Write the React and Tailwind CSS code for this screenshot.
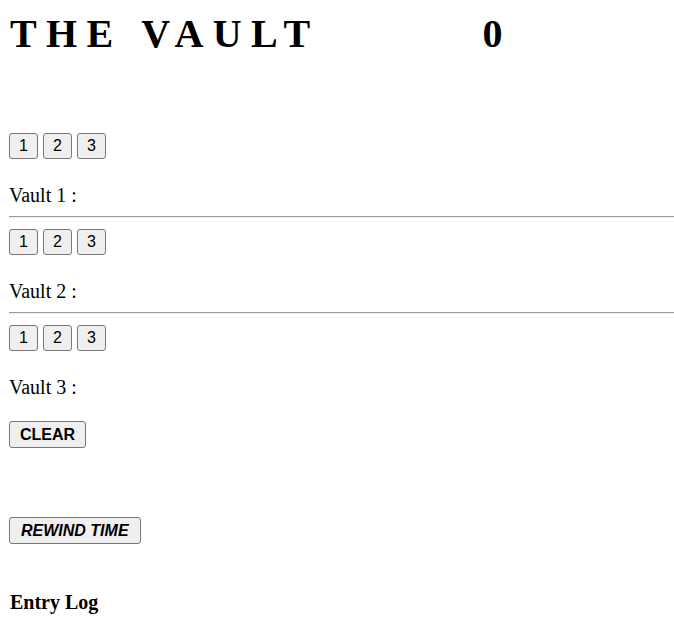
import React from 'react';

const serif = "font-['Liberation_Serif','Times_New_Roman',serif]";
const sans = "font-['Liberation_Sans',Arial,sans-serif]";

function NumButton({ n }) {
  return (
    <button className={`${sans} h-[26px] w-[29px] flex items-center justify-center bg-[#efefef] border border-[#767676] rounded-[3px] text-[16px] leading-[18px] text-black`}>
      {n}
    </button>
  );
}

function Vault({ id, last }) {
  return (
    <div>
      <div className="flex gap-[5px] ml-[9px]">
        <NumButton n="1" />
        <NumButton n="2" />
        <NumButton n="3" />
      </div>
      <p className={`${serif} mt-[25px] ml-[9px] text-[20px] leading-[22px] text-black`}>Vault {id} :</p>
      {!last && (
        <div className="mt-[10px] mb-[11px] ml-[9px] w-[665px] h-[2px] border-t border-[#9a9a9a] border-b border-b-[#eeeeee]" />
      )}
    </div>
  );
}

export default function App() {
  return (
    <div className="min-h-screen bg-white text-black">
      <h1 className={`${serif} pt-[11px] ml-[10px] flex text-[40px] leading-[46px] font-bold tracking-[9.4px]`}>
        <span>THE VAULT</span>
        <span className="ml-[163px]">0</span>
      </h1>

      <div className="mt-[76px]">
        <Vault id={1} />
        <Vault id={2} />
        <Vault id={3} last />
      </div>

      <button className={`${sans} mt-[23px] ml-[9px] h-[27px] px-[10px] flex items-center bg-[#efefef] border border-[#767676] rounded-[3px] text-[16px] font-bold`}>
        CLEAR
      </button>

      <button className={`${sans} mt-[69px] ml-[9px] h-[27px] px-[11px] flex items-center bg-[#efefef] border border-[#767676] rounded-[3px] text-[16px] font-bold italic`}>
        REWIND TIME
      </button>

      <h3 className={`${serif} mt-[47px] ml-[10px] text-[20px] leading-[23px] font-bold`}>Entry Log</h3>
    </div>
  );
}
